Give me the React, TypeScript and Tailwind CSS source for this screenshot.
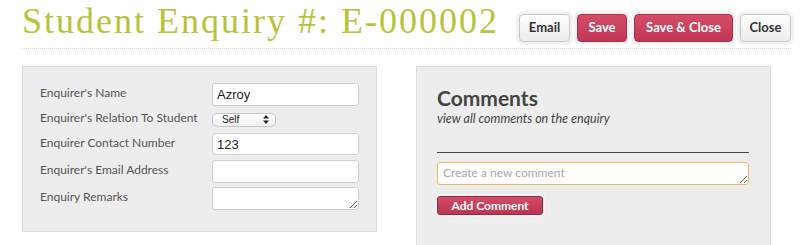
import { useState } from 'react';

// 問い合わせフォームのフィールド
const fieldLabel = 'text-[12px] text-[#555] leading-none pb-[3px]';
const textInput =
  'w-full bg-white border border-[#cfcfcf] rounded-[3px] px-[4px] text-[13px] text-[#222] font-["Liberation_Sans",sans-serif] outline-none';

function SelectArrows() {
  return (
    <svg width="6" height="9" viewBox="0 0 6 9" className="text-[#222]">
      <path d="M3 0 L6 3.5 H0 Z" fill="currentColor" />
      <path d="M3 9 L6 5.5 H0 Z" fill="currentColor" />
    </svg>
  );
}

export default function App() {
  const [name, setName] = useState('Azroy');
  const [contact, setContact] = useState('123');
  const [email, setEmail] = useState('');
  const [comment, setComment] = useState('');

  return (
    <div className="h-[245px] overflow-hidden bg-white font-['Lato',sans-serif]">
      <div className="ml-[22px] w-[769px]">
        {/* ヘッダー */}
        <div className="flex items-start justify-between border-b border-dotted border-[#d4d4d4] h-[49px]">
          <h1 className="font-['Liberation_Serif',serif] text-[36px] leading-[42px] text-[#b7c43b] tracking-[2px]">
            Student Enquiry #: E-000002
          </h1>
          <div className="flex gap-[7px] mt-[14px]">
            <button className="h-[28px] w-[51px] rounded-[4px] border border-[#c6c6c6] bg-gradient-to-b from-white to-[#ececec] text-[13px] font-bold text-[#333] shadow-[0_0_0_3px_#f2f2f2]">
              Email
            </button>
            <button className="h-[28px] w-[50px] rounded-[4px] border border-[#a9304b] bg-gradient-to-b from-[#d44d68] to-[#bf3654] text-[13px] font-bold text-white shadow-[0_0_0_3px_#f2f2f2]">
              Save
            </button>
            <button className="h-[28px] w-[99px] rounded-[4px] border border-[#a9304b] bg-gradient-to-b from-[#d44d68] to-[#bf3654] text-[13px] font-bold text-white shadow-[0_0_0_3px_#f2f2f2]">
              Save &amp; Close
            </button>
            <button className="h-[28px] w-[51px] rounded-[4px] border border-[#c6c6c6] bg-gradient-to-b from-white to-[#ececec] text-[13px] font-bold text-[#333] shadow-[0_0_0_3px_#f2f2f2]">
              Close
            </button>
          </div>
        </div>

        <div className="flex gap-[39px] mt-[17px]">
          {/* 左パネル：問い合わせ情報 */}
          <div className="w-[355px] h-[166px] bg-[#ededed] border border-[#dcdcdc] pl-[17px] pr-[17px] pt-[16px]">
            <div className="grid grid-cols-[172px_147px] items-center">
              <span className={fieldLabel}>Enquirer's Name</span>
              <input className={`${textInput} h-[23px]`} value={name} onChange={(e) => setName(e.target.value)} />

              <span className={`${fieldLabel} mt-[6px]`}>Enquirer's Relation To Student</span>
              <div className="mt-[6px] w-[64px] h-[14px] rounded-[5px] border border-[#c8c8c8] bg-gradient-to-b from-white to-[#f0f0f0] flex items-center justify-between pl-[9px] pr-[6px]">
                <span className="text-[10px] leading-none text-[#222] font-['Liberation_Sans',sans-serif]">Self</span>
                <SelectArrows />
              </div>

              <span className={`${fieldLabel} mt-[6px]`}>Enquirer Contact Number</span>
              <input className={`${textInput} h-[22px] mt-[6px]`} value={contact} onChange={(e) => setContact(e.target.value)} />

              <span className={`${fieldLabel} mt-[5px]`}>Enquirer's Email Address</span>
              <input className={`${textInput} h-[23px] mt-[5px]`} value={email} onChange={(e) => setEmail(e.target.value)} />

              <span className={`${fieldLabel} mt-[4px]`}>Enquiry Remarks</span>
              <textarea className={`${textInput} h-[23px] mt-[4px] block`} />
            </div>
          </div>

          {/* 右パネル：コメント */}
          <div className="w-[355px] h-[179px] bg-[#ededed] border border-[#dcdcdc] border-b-0 pl-[20px] pr-[21px] pt-[19px]">
            <h2 className="text-[21px] leading-[24px] font-bold text-[#444]">Comments</h2>
            <p className="text-[12.5px] italic text-[#444] leading-[16px] mt-[1px]">view all comments on the enquiry</p>
            <div className="mt-[25px] border-t border-[#444]" />
            <textarea
              className="block mt-[9px] w-full h-[23px] bg-white border border-[#efb65b] rounded-[3px] px-[5px] text-[12px] leading-[19px] text-[#222] placeholder:text-[#a8a8a8] outline-none"
              placeholder="Create a new comment"
              value={comment}
              onChange={(e) => setComment(e.target.value)}
            />
            <button className="mt-[11px] w-[106px] h-[19px] rounded-[3px] border border-[#8f2c42] bg-gradient-to-b from-[#d44d68] to-[#bb3552] text-[12px] leading-none font-bold text-white shadow-[0_0_0_2px_#f4f4f4]">
              Add Comment
            </button>
          </div>
        </div>
      </div>
    </div>
  );
}
